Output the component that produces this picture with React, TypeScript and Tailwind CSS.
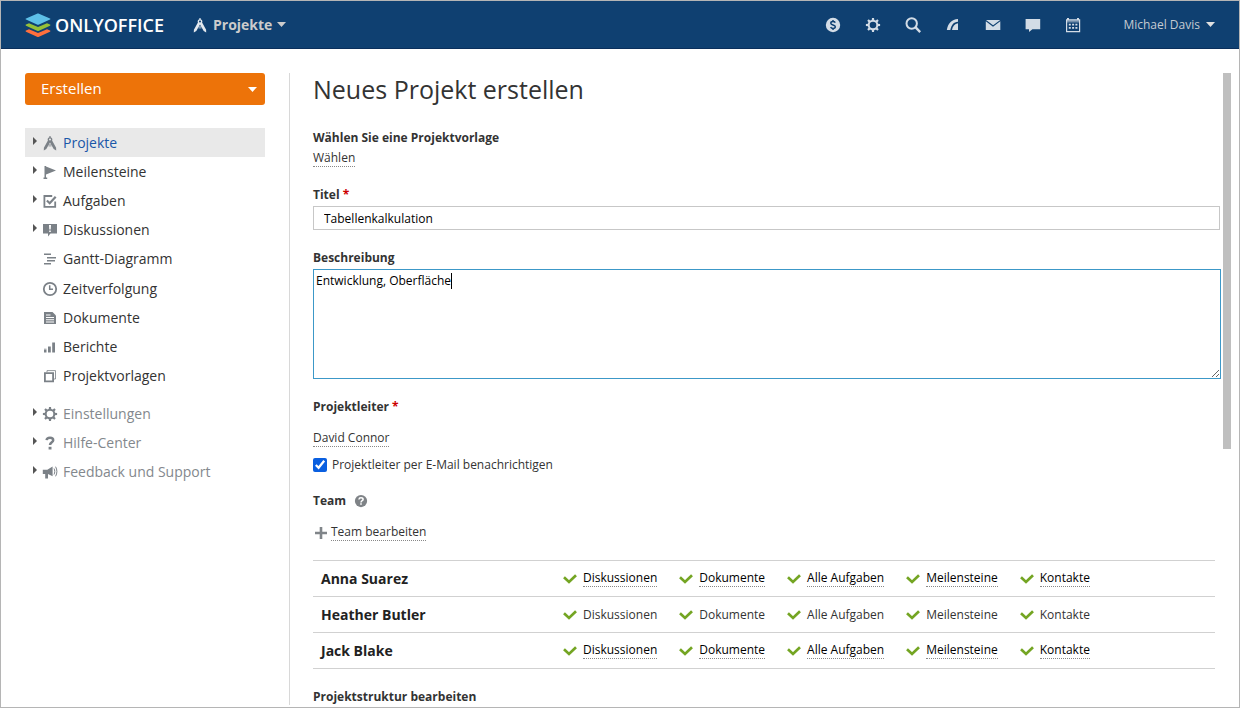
import type { ReactNode } from "react";

type IconProps = { className?: string };

function Svg({ className, size = 16, children }: IconProps & { size?: number; children: ReactNode }) {
  return (
    <svg
      className={className}
      width={size}
      height={size}
      viewBox="0 0 16 16"
      fill="currentColor"
      aria-hidden="true"
    >
      {children}
    </svg>
  );
}

function Caret({ className }: IconProps) {
  return (
    <svg className={className} width="9" height="5" viewBox="0 0 9 5" fill="currentColor" aria-hidden="true">
      <path d="M0 0h9L4.5 5z" />
    </svg>
  );
}

function Logo() {
  return (
    <svg width="26" height="24" viewBox="0 0 26 24" aria-hidden="true">
      <path fill="#ff6f3d" d="M1 17.6l3-1.4 9 3.8 9-3.8 3 1.4c.6.3.6.8 0 1.1l-11 5c-.6.3-1.4.3-2 0l-11-5c-.6-.3-.6-.8 0-1.1z" />
      <path fill="#95c038" d="M1 11.6l3-1.4 9 3.8 9-3.8 3 1.4c.6.3.6.8 0 1.1l-11 5c-.6.3-1.4.3-2 0l-11-5c-.6-.3-.6-.8 0-1.1z" />
      <path fill="#5dc0e8" d="M1 5.5l11-4.8c.6-.3 1.4-.3 2 0l11 4.8c.6.3.6.8 0 1.1l-11 5c-.6.3-1.4.3-2 0l-11-5c-.6-.3-.6-.8 0-1.1z" />
    </svg>
  );
}

const gearTeeth = [0, 45, 90, 135, 180, 225, 270, 315];

function GearIcon({ className }: IconProps) {
  return (
    <Svg className={className}>
      <circle cx="8" cy="8" r="4.3" fill="none" stroke="currentColor" strokeWidth="2" />
      {gearTeeth.map((angle) => (
        <path key={angle} d="M7 .9h2l.3 2.6H6.700z" transform={`rotate(${angle} 8 8)`} />
      ))}
    </Svg>
  );
}

function CompassIcon({ className }: IconProps) {
  return (
    <Svg className={className}>
      <path
        fillRule="evenodd"
        d="M7.4 1h1.200v1.300a2.300 2.300 0 0 1 1.500 3.300l4 7.200.1 2.700-2.500-1.500L8 7.400 4.300 14 1.800 15.500 1.900 12.800 5.900 5.600a2.300 2.300 0 0 1 1.500-3.300zM8 3.500a1 1 0 1 0 0 2 1 1 0 0 0 0-2z"
      />
      <path d="M6.500 9h3v2.600h-3z" opacity=".5" />
    </Svg>
  );
}

function DollarIcon() {
  return (
    <Svg>
      <circle cx="8" cy="8" r="7.2" />
      <path
        d="M10.3 5.7C9.8 4.9 9 4.6 8 4.6c-1.3 0-2.2.6-2.2 1.6 0 2.3 4.5 1.2 4.500 3.600 0 1-.9 1.600-2.200 1.600-1.100 0-2-.4-2.500-1.200M8 3v1.600M8 11.400V13"
        fill="none"
        stroke="#0f4071"
        strokeWidth="1.5"
      />
    </Svg>
  );
}

function SearchIcon() {
  return (
    <Svg>
      <g fill="none" stroke="currentColor">
        <circle cx="6.7" cy="6.5" r="5.200" strokeWidth="2" />
        <path d="M10.400 10.200l4.800 4.900" strokeWidth="2.4" />
      </g>
    </Svg>
  );
}

function FeedIcon() {
  return (
    <Svg>
      <path d="M13 2v2.800C8.500 5 6.500 8 5.300 13H1.800C3 6.500 6.500 2.500 13 2z" />
      <path d="M13 6.300V13H7c.6-3.700 2.500-6.200 6-6.700z" />
    </Svg>
  );
}

function MailIcon() {
  return (
    <Svg>
      <path d="M1 3h14.200L8.100 8.200z" />
      <path d="M.8 4.300L8 9.700l7.300-5.400V13H.8z" />
    </Svg>
  );
}

function ChatIcon() {
  return (
    <Svg>
      <path d="M.6 2h14.600v10.300H7.400L4 15v-2.700H.6z" />
    </Svg>
  );
}

function CalendarIcon() {
  return (
    <Svg>
      <path d="M2 1h2v2H2zM12 1h2v2h-2z" />
      <path fillRule="evenodd" d="M1 2.200h14.200V15.300H1zM2.200 5.200v8.900H14V5.200z" />
      <path d="M3.800 6.700h2v1.800h-2zM7.100 6.700h2v1.800h-2zM10.400 6.700h2v1.800h-2zM3.800 10h2v1.800h-2zM7.100 10h2v1.800h-2zM10.400 10h2v1.800h-2z" />
      <path d="M2.200 3.700H14v.8H2.200z" fill="#0f4071" />
    </Svg>
  );
}

function FlagIcon() {
  return (
    <Svg>
      <path d="M2.500 2H4v11.500h1.200V15H1.500v-1.500h1zM4 2.500l10 4L4 10.500z" />
    </Svg>
  );
}

function TaskIcon() {
  return (
    <Svg>
      <path d="M13.200 8.500v5.300H2.400V3h7.800" fill="none" stroke="currentColor" strokeWidth="1.8" />
      <path d="M4.900 7.500l2.800 2.700 6-6.500" fill="none" stroke="currentColor" strokeWidth="2.2" />
    </Svg>
  );
}

function DiscussionIcon() {
  return (
    <Svg>
      <path d="M1 2h14v9.500H8.500L6 14.500v-3H1z" />
      <path d="M7 3h2l-.3 4.500H7.300zM7.200 8.500h1.600V10H7.200z" fill="#fff" />
    </Svg>
  );
}

function GanttIcon() {
  return (
    <Svg>
      <path d="M2 2.500h7V4H2zM5 6h9v1.500H5zM5 9h8v1.500H5zM2 12h7v1.500H2z" />
    </Svg>
  );
}

function ClockIcon() {
  return (
    <Svg>
      <g fill="none" stroke="currentColor">
        <circle cx="8" cy="8" r="6.2" strokeWidth="1.8" />
        <path d="M7.700 4.300v4h3.300" strokeWidth="1.5" />
      </g>
    </Svg>
  );
}

function DocumentIcon() {
  return (
    <Svg>
      <path d="M2 2h8.500L14 5.500V14H2z" />
      <path d="M4 4.500h4.500v1H4zM4 7h8v1H4zM4 9.300h8v1H4zM4 11.600h8v1H4z" fill="#fff" />
    </Svg>
  );
}

function ReportIcon() {
  return (
    <Svg>
      <path d="M2 10.500h2.500v3H2zM6 7.500h2.800v6H6zM10.200 3.500H13v10h-2.800z" />
      <path d="M2 9.500h2.500v1H2z" opacity=".5" />
    </Svg>
  );
}

function TemplateIcon() {
  return (
    <Svg>
      <path d="M5 4.200V2.600h8.500V11H12" fill="none" stroke="currentColor" opacity=".8" />
      <path d="M2.900 5.200h8.200v8.200H2.900z" fill="none" stroke="currentColor" strokeWidth="1.8" />
    </Svg>
  );
}

function QuestionIcon() {
  return (
    <Svg>
      <path
        d="M4.600 5.200C4.800 3.500 6.200 2.800 8 2.800c1.900 0 3.200.9 3.200 2.400 0 2.100-3.200 2-3.200 4.900"
        fill="none"
        stroke="currentColor"
        strokeWidth="2.5"
      />
      <path d="M6.600 11.800h2.900v2.700H6.600z" />
    </Svg>
  );
}

function MegaphoneIcon() {
  return (
    <Svg>
      <path d="M.8 5.800h4.500L10.600 2.500v9.800L6 10v4.500H3.200V10H.8z" />
      <path d="M12 4.500c1 1.700 1 4.300 0 6M13.600 2.700c1.700 3 1.700 6.600 0 9.600" fill="none" stroke="currentColor" />
    </Svg>
  );
}

function HelpIcon() {
  return (
    <Svg size={14}>
      <circle cx="8" cy="8" r="7" />
      <path
        d="M5.600 6.300C5.700 5 6.700 4.300 8 4.300c1.400 0 2.400.7 2.400 1.900C10.400 7.700 8 7.700 8 9.700"
        fill="none"
        stroke="#fff"
        strokeWidth="1.7"
      />
      <path d="M7.100 10.600h1.800v1.700H7.100z" fill="#fff" />
    </Svg>
  );
}

function CheckIcon() {
  return (
    <svg className="shrink-0" width="14" height="10" viewBox="0 0 14 10" aria-hidden="true">
      <path d="M1 3.300l5 4.600 7-6.700" fill="none" stroke="#74a523" strokeWidth="2.7" />
    </svg>
  );
}

type NavItem = { label: string; icon: ReactNode; expandable?: boolean; active?: boolean };

const mainNav: NavItem[] = [
  { label: "Projekte", icon: <CompassIcon />, expandable: true, active: true },
  { label: "Meilensteine", icon: <FlagIcon />, expandable: true },
  { label: "Aufgaben", icon: <TaskIcon />, expandable: true },
  { label: "Diskussionen", icon: <DiscussionIcon />, expandable: true },
  { label: "Gantt-Diagramm", icon: <GanttIcon /> },
  { label: "Zeitverfolgung", icon: <ClockIcon /> },
  { label: "Dokumente", icon: <DocumentIcon /> },
  { label: "Berichte", icon: <ReportIcon /> },
  { label: "Projektvorlagen", icon: <TemplateIcon /> },
];

const serviceNav: NavItem[] = [
  { label: "Einstellungen", icon: <GearIcon />, expandable: true },
  { label: "Hilfe-Center", icon: <QuestionIcon />, expandable: true },
  { label: "Feedback und Support", icon: <MegaphoneIcon />, expandable: true },
];

const headerTools = [
  { label: "Zahlungen", icon: <DollarIcon /> },
  { label: "Einstellungen", icon: <GearIcon /> },
  { label: "Suche", icon: <SearchIcon /> },
  { label: "Feed", icon: <FeedIcon /> },
  { label: "E-Mail", icon: <MailIcon /> },
  { label: "Chat", icon: <ChatIcon /> },
  { label: "Kalender", icon: <CalendarIcon /> },
];

const permissions = ["Diskussionen", "Dokumente", "Alle Aufgaben", "Meilensteine", "Kontakte"];

const team = [
  { name: "Anna Suarez", locked: false },
  { name: "Heather Butler", locked: true },
  { name: "Jack Blake", locked: false },
];

function Header() {
  return (
    <header className="flex h-12 items-center border-b border-[#0a2f5c] bg-[#0f4071] px-6 text-[#d3dce6]">
      <a href="#" className="flex items-center gap-1 text-lg font-semibold text-white">
        <Logo />
        ONLYOFFICE
      </a>
      <button type="button" className="ml-7 flex items-center gap-[5px] text-sm font-bold text-[#ccc]">
        <CompassIcon className="text-[#e3e9ef]" />
        Projekte
        <Caret />
      </button>
      <nav className="ml-auto flex gap-6">
        {headerTools.map((tool) => (
          <button key={tool.label} type="button" aria-label={tool.label}>
            {tool.icon}
          </button>
        ))}
      </nav>
      <button type="button" className="ml-[42px] flex items-center gap-[6px] text-xs text-[#c5cbd2]">
        Michael Davis
        <Caret className="text-[#e0e0e0]" />
      </button>
    </header>
  );
}

function NavRow({ item }: { item: NavItem }) {
  return (
    <li className={item.active ? "bg-[#e9e9e9]" : ""}>
      <a href="#" className="flex h-full items-center pl-2">
        <span className="w-[9px] pb-1 text-[#555]">
          {item.expandable && (
            <svg width="4" height="8" viewBox="0 0 4 8" fill="currentColor" aria-hidden="true">
              <path d="M0 0l4 4-4 4z" />
            </svg>
          )}
        </span>
        <span className="text-[#7b8187]">{item.icon}</span>
        <span className={item.active ? "ml-[5px] text-[#1a57a8]" : "ml-[5px]"}>{item.label}</span>
      </a>
    </li>
  );
}

function Sidebar() {
  return (
    <aside className="w-60 shrink-0 text-sm">
      <button
        type="button"
        className="flex h-8 w-full items-center justify-between rounded-[3px] bg-[#ed7309] pr-2 pl-4 text-[15px] leading-5 text-white"
      >
        <span className="pb-[2px]">Erstellen</span>
        <Caret />
      </button>
      <ul className="mt-[23px] grid h-[263px] auto-rows-fr text-[#333]">
        {mainNav.map((item) => (
          <NavRow key={item.label} item={item} />
        ))}
      </ul>
      <ul className="mt-2 grid h-[87px] auto-rows-fr text-[#83888d]">
        {serviceNav.map((item) => (
          <NavRow key={item.label} item={item} />
        ))}
      </ul>
    </aside>
  );
}

function Required() {
  return <span className="text-[#c00]">*</span>;
}

function TeamTable() {
  return (
    <table className="mt-[19px] mr-[6px] border-t border-[#d1d1d1]">
      <tbody>
        {team.map((member) => (
          <tr key={member.name} className="h-9 border-b border-[#d1d1d1]">
            <th
              scope="row"
              className="min-w-[250px] pl-2 text-left text-sm font-bold whitespace-nowrap text-[#222]"
            >
              {member.name}
            </th>
            {permissions.map((permission) => (
              <td key={permission} className="pr-[22px] whitespace-nowrap last:w-full">
                <button
                  type="button"
                  disabled={member.locked}
                  className={member.locked ? "flex items-center gap-[6px]" : "flex items-center gap-[6px] text-black"}
                >
                  <CheckIcon />
                  <span className={member.locked ? "leading-4" : "border-b border-dotted border-[#888] leading-4"}>
                    {permission}
                  </span>
                </button>
              </td>
            ))}
          </tr>
        ))}
      </tbody>
    </table>
  );
}

function ProjectForm() {
  return (
    <form className="flex min-w-0 flex-1 flex-col">
      <h1 className="text-[25px] leading-8 text-[#333]">Neues Projekt erstellen</h1>

      <h2 className="mt-[23px] font-bold">Wählen Sie eine Projektvorlage</h2>
      <button type="button" className="mt-[2px] self-start border-b border-dotted border-[#888] leading-4">
        Wählen
      </button>

      <label htmlFor="title" className="mt-[18px] font-bold">
        Titel <Required />
      </label>
      <input
        id="title"
        type="text"
        defaultValue="Tabellenkalkulation"
        className="mt-px mr-px h-6 border border-[#c7c7c7] px-[10px] text-black outline-none"
      />

      <label htmlFor="description" className="mt-[18px] font-bold">
        Beschreibung
      </label>
      <div className="relative mt-px flex">
        <textarea
          id="description"
          defaultValue="Entwicklung, Oberfläche"
          className="h-[110px] w-full resize-y border border-[#3c98c8] px-[2px] py-px text-black outline-none"
        />
        <span className="absolute top-1 left-[138px] h-4 w-px bg-black" />
      </div>

      <h2 className="mt-[18px] font-bold">
        Projektleiter <Required />
      </h2>
      <button type="button" className="mt-[13px] self-start border-b border-dotted border-[#888] leading-4">
        David Connor
      </button>
      <label className="mt-2 flex items-center gap-[5px]">
        <input type="checkbox" defaultChecked className="size-[14px] accent-[#0a5fe0]" />
        Projektleiter per E-Mail benachrichtigen
      </label>

      <div className="mt-4 flex items-center gap-2">
        <h2 className="font-bold">Team</h2>
        <button type="button" aria-label="Hilfe" className="text-[#7f8387]">
          <HelpIcon />
        </button>
      </div>
      <button type="button" className="mt-[13px] flex items-center gap-1 self-start pl-[2px]">
        <svg width="12" height="12" viewBox="0 0 12 12" fill="#808589" aria-hidden="true">
          <path d="M4.700 0h2.600v4.700H12v2.600H7.300V12H4.700V7.300H0V4.700h4.700z" />
        </svg>
        <span className="border-b border-dotted border-[#888] leading-4">Team bearbeiten</span>
      </button>

      <TeamTable />

      <h2 className="mt-5 leading-4 font-bold">Projektstruktur bearbeiten</h2>
    </form>
  );
}

export default function App() {
  return (
    <div className="flex min-h-screen flex-col border border-[#b5b5b5] bg-white font-['Open_Sans',sans-serif]">
      <Header />
      <div className="flex flex-1 pt-6 pr-2 pb-[2px] pl-6">
        <Sidebar />
        <main className="ml-6 flex min-w-0 flex-1 gap-[2px] border-l border-[#d8d8d8] pl-[23px] text-xs leading-5 text-[#333]">
          <ProjectForm />
          <div className="h-[376px] w-2 shrink-0 bg-[#bfbfbf]" />
        </main>
      </div>
    </div>
  );
}
